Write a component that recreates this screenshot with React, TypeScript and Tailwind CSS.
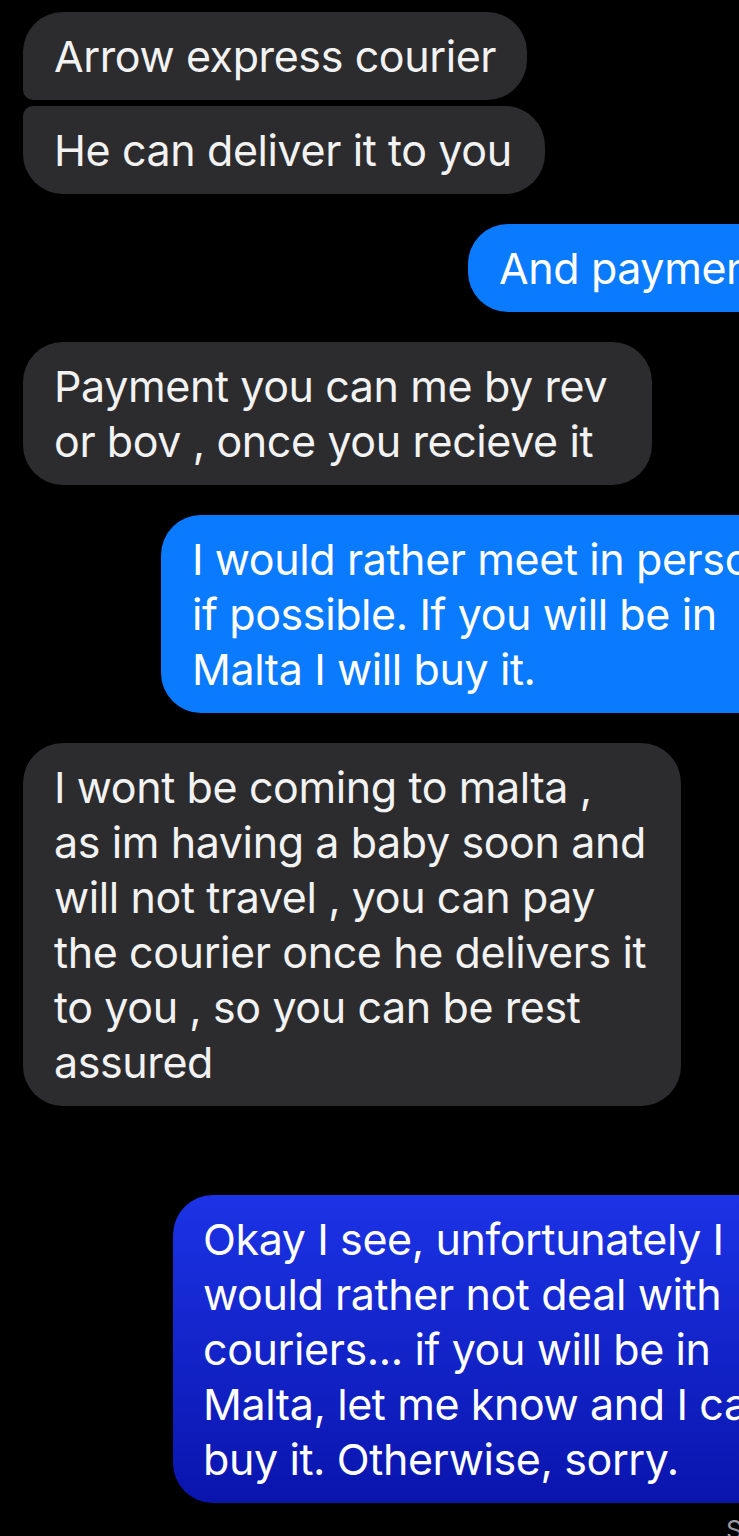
import React from 'react';

const font = { fontFamily: 'Inter, "Liberation Sans", sans-serif' };

const Lines: React.FC<{ lines: string[] }> = ({ lines }) => (
  <>
    {lines.map((l, i) => (
      <div key={i} className="whitespace-nowrap">
        {l}
      </div>
    ))}
  </>
);

export default function App() {
  return (
    <div className="w-[739px] h-[1536px] bg-black overflow-hidden" style={font}>
      <div className="flex flex-col pt-[12px] text-[43px] leading-[55px] tracking-[-0.4px]">
        {/* received group */}
        <div className="ml-[23px] w-[504px] rounded-[40px] rounded-bl-[10px] bg-[#2c2c2e] px-[31px] py-[16.5px] text-[#f2f2f2]">
          <Lines lines={['Arrow express courier']} />
        </div>
        <div className="ml-[23px] mt-[6px] w-[522px] rounded-[40px] rounded-tl-[10px] bg-[#2c2c2e] px-[31px] py-[16.5px] text-[#f2f2f2]">
          <Lines lines={['He can deliver it to you']} />
        </div>

        {/* sent */}
        <div className="ml-[468px] mt-[30px] w-[360px] rounded-[40px] bg-[#0a7aff] px-[31px] py-[16.5px] text-white">
          <Lines lines={['And payment?']} />
        </div>

        <div className="ml-[23px] mt-[30px] w-[629px] rounded-[40px] bg-[#2c2c2e] px-[31px] py-[16.5px] text-[#f2f2f2]">
          <Lines lines={['Payment you can me by rev', 'or bov , once you recieve it']} />
        </div>

        <div className="ml-[161px] mt-[30px] w-[640px] rounded-[40px] bg-[#0a7aff] px-[31px] py-[16.5px] text-white">
          <Lines lines={['I would rather meet in person', 'if possible. If you will be in', 'Malta I will buy it.']} />
        </div>

        <div className="ml-[23px] mt-[30px] w-[658px] rounded-[40px] bg-[#2c2c2e] px-[31px] py-[16.5px] text-[#f2f2f2]">
          <Lines
            lines={[
              'I wont be coming to malta ,',
              'as im having a baby soon and',
              'will not travel , you can pay',
              'the courier once he delivers it',
              'to you , so you can be rest',
              'assured',
            ]}
          />
        </div>

        <div className="ml-[173px] mt-[89px] w-[640px] rounded-[40px] bg-linear-to-b from-[#1c33e6] to-[#0a14ad] px-[30px] py-[16.5px] text-white">
          <Lines
            lines={[
              'Okay I see, unfortunately I',
              'would rather not deal with',
              'couriers... if you will be in',
              'Malta, let me know and I can',
              'buy it. Otherwise, sorry.',
            ]}
          />
        </div>

        <div className="mt-[12px] pl-[726px] whitespace-nowrap text-[26px] leading-[30px] text-[#9a9aa0]">
          Sent
        </div>
      </div>
    </div>
  );
}
